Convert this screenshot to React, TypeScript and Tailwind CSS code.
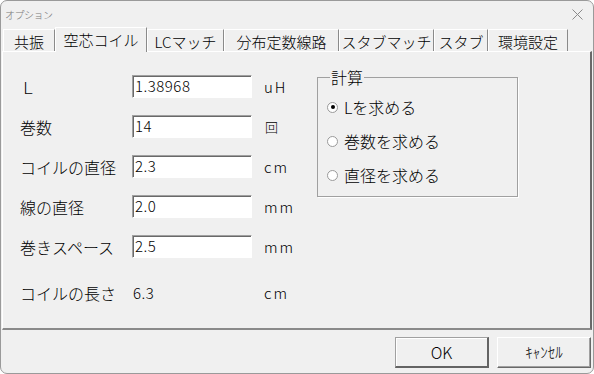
import React from 'react';

const jp = { fontFamily: '"Noto Sans CJK JP", "Noto Sans", sans-serif' };

const tabs = [
  { label: '共振', w: 'w-[52px]' },
  { label: '空芯コイル', w: 'w-[92px]', active: true },
  { label: 'LCマッチ', w: 'w-[77px]' },
  { label: '分布定数線路', w: 'w-[115px]' },
  { label: 'スタブマッチ', w: 'w-[95px]' },
  { label: 'スタブ', w: 'w-[54px]' },
  { label: '環境設定', w: 'w-[80px]' },
];

const fields = [
  { label: 'Ｌ', value: '1.38968', unit: 'uH' },
  { label: '巻数', value: '14', unit: '回', small: true },
  { label: 'コイルの直径', value: '2.3', unit: 'cm' },
  { label: '線の直径', value: '2.0', unit: 'mm' },
  { label: '巻きスペース', value: '2.5', unit: 'mm' },
];

const radios = ['Lを求める', '巻数を求める', '直径を求める'];

function TextBox({ value }: { value: string }) {
  return (
    <div className="w-[120px] h-[23px] bg-white border-t border-l border-[#a0a0a0] border-b-[#ffffff] border-r-[#ffffff] border-b border-r shadow-[inset_1px_1px_0_#696969] flex items-center pl-[2px] text-[15px] tracking-[0.5px] text-black">
      {value}
    </div>
  );
}

function Radio({ checked, label }: { checked?: boolean; label: string }) {
  return (
    <div className="h-[20px] flex items-center gap-[6px]">
      <div className="w-[11px] h-[11px] rounded-full bg-white border border-[#9a9a9a] flex items-center justify-center">
        {checked && <div className="w-[4px] h-[4px] rounded-full bg-black" />}
      </div>
      <span className="text-[16px] leading-[20px] text-black">{label}</span>
    </div>
  );
}

export default function App() {
  return (
    <div
      className="w-[594px] h-[374px] bg-[#f0f0f0] border border-[#9a9a9a] rounded-[7px] overflow-hidden flex flex-col select-none font-light"
      style={jp}
    >
      {/* Title bar */}
      <div className="h-[26px] flex items-center justify-between pl-[4px] pr-[10px]">
        <span className="text-[10px] tracking-[-0.5px] text-[#7a7a7a]">オプション</span>
        <svg width="11" height="11" viewBox="0 0 11 11" className="mt-[1px]">
          <path d="M0.5 0.5 L10.5 10.5 M10.5 0.5 L0.5 10.5" stroke="#8a8a8a" strokeWidth="1" />
        </svg>
      </div>

      {/* Tabs */}
      <div className="h-[24px] flex items-end pl-[2px] relative z-10">
        {tabs.map((t) =>
          t.active ? (
            <div
              key={t.label}
              className={`${t.w} h-[25px] -mb-[1px] bg-[#f0f0f0] border-t border-l border-white border-r-[#8a8a8a] border-r flex items-center justify-center whitespace-nowrap text-[15px] leading-none text-black pb-[2px]`}
            >
              {t.label}
            </div>
          ) : (
            <div
              key={t.label}
              className={`${t.w} h-[22px] border-t border-l border-white border-r-[#8a8a8a] border-r flex items-center justify-center whitespace-nowrap text-[15px] leading-none text-black pt-[1px]`}
            >
              {t.label}
            </div>
          )
        )}
      </div>

      {/* Panel */}
      <div className="mx-[1px] h-[279px] border-t border-l border-white border-r-[#696969] border-b-[#8a8a8a] border-r-2 border-b-2 flex">
        <div className="w-[314px] pl-[17px] pt-[23px] flex flex-col">
          <div className="flex flex-col gap-[17px]">
            {fields.map((f) => (
              <div key={f.label} className="h-[23px] flex items-center">
                <span className="w-[112px] text-[16px] leading-none text-black">{f.label}</span>
                <TextBox value={f.value} />
                {f.small ? (
                  <span className="ml-[13px] text-[13px] leading-none text-black">{f.unit}</span>
                ) : (
                  <span className="ml-[12px] text-[15px] tracking-[2px] leading-none text-black">{f.unit}</span>
                )}
              </div>
            ))}
          </div>
          <div className="h-[23px] mt-[23px] flex items-center">
            <span className="w-[112px] text-[16px] leading-none text-black">コイルの長さ</span>
            <span className="w-[120px] pl-[1px] text-[15px] tracking-[0.5px] leading-none text-black">6.3</span>
            <span className="ml-[12px] text-[15px] tracking-[2px] leading-none text-black">cm</span>
          </div>
        </div>

        <fieldset className="w-[201px] h-[128px] mt-[17px] border border-[#a0a0a0] shadow-[1px_1px_0_#ffffff] pl-[9px] pt-[12px] flex flex-col gap-[14px]">
          <legend className="ml-[3px] px-[1px] text-[16px] leading-[16px] text-black">計算</legend>
          {radios.map((r, i) => (
            <Radio key={r} label={r} checked={i === 0} />
          ))}
        </fieldset>
      </div>

      {/* Buttons */}
      <div className="flex justify-end gap-[8px] pr-[2px] pt-[7px]">
        <button className="w-[94px] h-[31px] bg-[#f0f0f0] border border-t-[#a0a0a0] border-l-[#a0a0a0] border-r-2 border-b-2 border-r-[#646464] border-b-[#646464] shadow-[inset_1px_1px_0_#ffffff] text-[16px] text-black font-light">
          OK
        </button>
        <button className="w-[94px] h-[31px] bg-[#f0f0f0] border border-t-white border-l-white border-r-[#696969] border-b-[#696969] shadow-[inset_-1px_-1px_0_#a0a0a0] text-[15px] text-black font-light">
          ｷｬﾝｾﾙ
        </button>
      </div>
    </div>
  );
}
